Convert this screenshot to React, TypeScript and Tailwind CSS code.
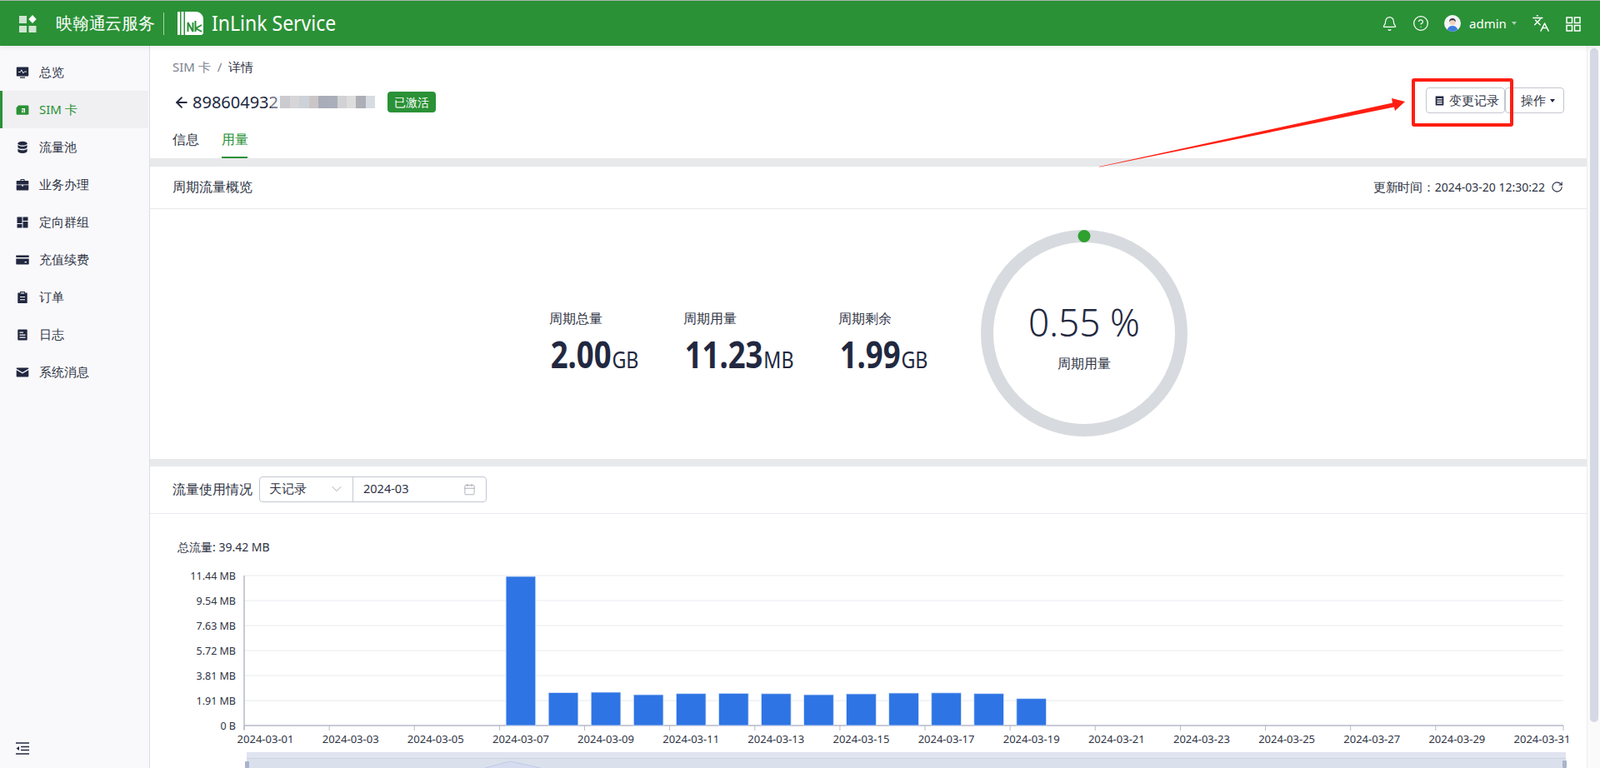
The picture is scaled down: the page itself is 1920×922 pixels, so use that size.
import { ArrowLeft, Bell, Calendar, ChevronDown, CircleHelp, Languages, RotateCw } from 'lucide-react'
import type { ReactNode } from 'react'

const dark = '#222840'

function Glyph({ children, className }: { children: ReactNode; className?: string }) {
  return (
    <svg viewBox="0 0 16 16" className={className ?? 'w-4 h-4'} fill={dark}>
      {children}
    </svg>
  )
}

const navItems: { label: string; active?: boolean; icon: ReactNode }[] = [
  {
    label: '总览',
    icon: (
      <Glyph>
        <path d="M1.5 1.5h13a.7.7 0 0 1 .7.7v9.6a.7.7 0 0 1-.7.7h-13a.7.7 0 0 1-.7-.7V2.2a.7.7 0 0 1 .7-.7zM5 13.5h6v1.2H5z" />
        <path d="M3 7.5h2.4l1.4-2.6 2 4 1.4-1.8H13" fill="none" stroke="#f9f9fb" strokeWidth="0.9" />
      </Glyph>
    ),
  },
  {
    label: 'SIM 卡',
    active: true,
    icon: (
      <Glyph>
        <path d="M3 2.6h11a1.4 1.4 0 0 1 1.4 1.4v8.4a1.4 1.4 0 0 1-1.4 1.4H2a1.4 1.4 0 0 1-1.4-1.4V5.4z" fill="#2a9136" />
        <path d="M7 6h4v5.2H9.4V7.4H7zM7 8.6h1.6v2.6H7z" fill="#f0f0f2" />
      </Glyph>
    ),
  },
  {
    label: '流量池',
    icon: (
      <Glyph>
        <ellipse cx="8" cy="3.2" rx="5.6" ry="2.4" />
        <path d="M2.4 5v2.4c0 1.3 2.5 2.4 5.6 2.4s5.6-1.1 5.6-2.4V5c-1 1.2-3.2 1.8-5.6 1.8S3.4 6.2 2.4 5z" />
        <path d="M2.4 9.4v3.2c0 1.3 2.5 2.4 5.6 2.4s5.6-1.1 5.6-2.4V9.4c-1 1.2-3.2 1.8-5.6 1.8S3.4 10.6 2.4 9.4z" />
      </Glyph>
    ),
  },
  {
    label: '业务办理',
    icon: (
      <Glyph>
        <path d="M5.4 3V1.8c0-.5.4-.8.8-.8h3.6c.4 0 .8.3.8.8V3h4.100c.4 0 .6.3.6.6v3.800H.7V3.600c0-.3.2-.6.6-.6zm1.100 0h3V2h-3z" />
        <path d="M.7 8.200h6.300v1.300h2V8.200h6.300v5.600c0 .4-.3.7-.7.7H1.400c-.4 0-.7-.3-.7-.7z" />
      </Glyph>
    ),
  },
  {
    label: '定向群组',
    icon: (
      <Glyph>
        <path d="M1.5 1.5h6v7.500h-6zM8.500 1.5h6v4.500h-6zM8.500 7h6v7.500h-6zM1.5 10h6v4.500h-6z" />
      </Glyph>
    ),
  },
  {
    label: '充值续费',
    icon: (
      <Glyph>
        <path d="M.3 2.500h15.400v2.600H.3zM.3 6.400h15.400v6.400c0 .4-.3.7-.7.7H1c-.4 0-.7-.3-.7-.7zM10.500 10v1.300h2.500V10z" fillRule="evenodd" />
      </Glyph>
    ),
  },
  {
    label: '订单',
    icon: (
      <Glyph>
        <path d="M5 1h6v1.500h2.200c.3 0 .5.2.5.5v11.500c0 .3-.2.5-.5.5H2.800c-.3 0-.5-.2-.5-.5V3c0-.3.2-.5.5-.5H5zM5.800 2.200v1.300h4.400V2.200zM5 7v1h6V7zM5 10.200v1h6v-1z" fillRule="evenodd" />
      </Glyph>
    ),
  },
  {
    label: '日志',
    icon: (
      <Glyph>
        <path d="M3 1.500h10c.4 0 .7.3.7.7v11.600c0 .4-.3.7-.7.7H3c-.4 0-.7-.3-.7-.7V2.200c0-.4.3-.7.7-.7zM4.500 4.500v1.200h4.500V4.500zM4.500 7.500v1.200h7V7.500zM4.500 10.500v1.200h7v-1.200z" fillRule="evenodd" />
      </Glyph>
    ),
  },
  {
    label: '系统消息',
    icon: (
      <Glyph>
        <path d="M1.500 2.500h13c.5 0 .8.3.8.8v.5L8 8 .7 3.800v-.5c0-.5.3-.8.8-.8z" />
        <path d="M.7 5.300 8 9.500l7.300-4.200v7.400c0 .5-.3.8-.8.8h-13c-.5 0-.8-.3-.8-.8z" />
      </Glyph>
    ),
  },
]

const mosaic = [
  'bg-[#ecebed]/40',
  'bg-[#cbcbcf]',
  'bg-[#d6d5d7]',
  'bg-[#ccd2d8]',
  'bg-[#cac6c8]',
  'bg-[#a9adb9]',
  'bg-[#aaaeba]',
  'bg-[#d2d2d4]',
  'bg-[#dddddd]',
  'bg-[#aeaeb6]',
  'bg-[#d6dce2]',
]

// bar tops in page pixels, 03-07 to 03-19
const bars = [692, 831.5, 831, 834, 832.7, 832.3, 832.8, 834, 833, 832, 831.8, 832.7, 838.7]
const yTicks = [
  ['11.44 MB', 691],
  ['9.54 MB', 721],
  ['7.63 MB', 751],
  ['5.72 MB', 781],
  ['3.81 MB', 811],
  ['1.91 MB', 841],
  ['0 B', 871],
] as const

const dayWidth = (1876 - 293) / 31

function Header() {
  return (
    <header className="relative h-[55px] shrink-0 bg-[#2a9136] border-t border-[#a9b3aa] text-white z-10 shadow-[0_2px_6px_rgba(0,0,0,0.08)]">
      <svg viewBox="0 0 22 21" className="absolute left-[22px] top-[17px] w-[22px] h-[21px]">
        <rect x="1" y="1" width="9" height="9" fill="#cfe6d2" />
        <rect x="1" y="13" width="9" height="8" fill="#cfe6d2" />
        <rect x="12.5" y="13" width="9" height="8" fill="#cfe6d2" />
        <path d="M17 0l4.700 5-4.700 5-4.700-5z" fill="#fff" />
      </svg>
      <span className="absolute left-[67px] top-[12px] text-[20px] leading-[30px] tracking-[-0.2px]">映翰通云服务</span>
      <span className="absolute left-[196px] top-[14px] w-px h-[27px] bg-white/60" />
      <svg viewBox="0 0 31 28" className="absolute left-[213px] top-[13px] w-[31px] h-[28px]">
        <rect x="0" y="0" width="3" height="28" rx="1" fill="#fff" />
        <rect x="4.5" y="0" width="3" height="28" fill="#fff" />
        <path d="M9 0h13c5 0 9 4 9 9v16c0 1.700-1.300 3-3 3H9z" fill="#fff" />
        <path d="M12.500 24V13l6 11V13M21.500 11v13M29 16l-7 4 7 4" fill="none" stroke="#2a9136" strokeWidth="2" />
      </svg>
      <span className="absolute left-[254px] top-[8px] text-[26px] leading-[36px] font-['Roboto',sans-serif] origin-left scale-x-[0.885] whitespace-nowrap">
        InLink Service
      </span>

      <Bell className="absolute left-[1658px] top-[18px] w-[19px] h-[19px]" strokeWidth={1.5} />
      <CircleHelp className="absolute left-[1695px] top-[17px] w-[20px] h-[20px]" strokeWidth={1.5} />
      <svg viewBox="0 0 20 20" className="absolute left-[1733px] top-[17px] w-5 h-5">
        <circle cx="10" cy="10" r="10" fill="#f4f5f6" />
        <path d="M3.800 17.800c.6-3.300 3-4.800 6.200-4.800s5.600 1.500 6.200 4.800A10 10 0 0 1 3.800 17.800z" fill="#3f7fdc" />
        <circle cx="10" cy="8.500" r="3.600" fill="#f3d3bd" />
        <path d="M6.200 8.500C5.800 5.500 7.500 4 10 4s4.200 1.500 3.800 4.500c-.8-1.600-2-2.200-3.800-2.200S7 6.900 6.200 8.500z" fill="#333a46" />
      </svg>
      <span className="absolute left-[1763px] top-[16px] text-[15px] leading-[22px]">admin</span>
      <span className="absolute left-[1814px] top-[25px] border-x-[3px] border-t-[4px] border-x-transparent border-t-white/60" />
      <Languages className="absolute left-[1838px] top-[16px] w-[22px] h-[22px]" strokeWidth={1.6} />
      <svg viewBox="0 0 18 18" className="absolute left-[1879px] top-[19px] w-[18px] h-[18px]" fill="none" stroke="#fff" strokeWidth="1.5">
        <rect x="1" y="1" width="6.5" height="6.5" />
        <rect x="10.5" y="1" width="6.5" height="6.5" />
        <rect x="1" y="10.5" width="6.5" height="6.5" />
        <rect x="10.5" y="10.5" width="6.5" height="6.5" />
      </svg>
    </header>
  )
}

function Sidebar() {
  return (
    <aside className="relative w-[180px] shrink-0 bg-[#f9f9fb] border-r border-[#dcdde3]">
      <nav className="flex flex-col pt-[9px]">
        {navItems.map((item) => (
          <div
            key={item.label}
            className={
              item.active
                ? 'flex items-center h-[45px] pl-[16px] mr-px border-l-[3px] border-[#2a9136] bg-[#f0f0f2] text-[#2a9136] text-[15px]'
                : 'flex items-center h-[45px] pl-[19px] text-[#2e3344] text-[15px]'
            }
          >
            <span className="flex w-[28px]">{item.icon}</span>
            {item.label}
          </div>
        ))}
      </nav>
      <svg viewBox="0 0 16 15" className="absolute left-[19px] top-[836px] w-4 h-[15px]" stroke={dark} strokeWidth="1.3" fill="none">
        <path d="M0 1h16M6 5.500h10M6 9.500h10M0 14h16" />
        <path d="M4 5v5L0.500 7.500z" fill={dark} stroke="none" />
      </svg>
    </aside>
  )
}

function Stat({ label, value, unit, width }: { label: string; value: string; unit: string; width: string }) {
  return (
    <div className={`${width} mt-[18px]`}>
      <div className="text-[16px] leading-[22px] text-[#2e3344]">{label}</div>
      <div className="flex items-baseline mt-[7px] pl-[2px] h-[50px] font-['Roboto',sans-serif] text-[#222840] whitespace-nowrap origin-left scale-x-[0.83]">
        <span className="text-[44px] leading-[50px] font-bold">{value}</span>
        <span className="text-[28px] leading-[50px] ml-[1px]">{unit}</span>
      </div>
    </div>
  )
}

function Ring() {
  return (
    <div className="relative w-[248px] h-[248px] shrink-0 -mt-[2px]">
      <svg viewBox="0 0 248 248" className="absolute inset-0">
        <circle cx="124" cy="124" r="116.5" fill="none" stroke="#d7dade" strokeWidth="15" />
        <circle cx="124" cy="7.5" r="7.5" fill="#2ea12f" />
      </svg>
      <div className="absolute left-0 right-0 top-[82px] text-center text-[46px] leading-[56px] font-light font-['Roboto',sans-serif] text-[#222840] scale-x-[0.96]">
        0.55 %
      </div>
      <div className="absolute left-0 right-0 top-[149px] text-center text-[16px] leading-[22px] text-[#2e3344]">周期用量</div>
    </div>
  )
}

function Chart() {
  return (
    <svg viewBox="180 617 1724 305" className="w-[1724px] h-[305px] block">
      <text x="213" y="662" fontSize="14" fill="#2e3344">
        总流量: 39.42 MB
      </text>
      {yTicks.map(([label, y]) => (
        <g key={label}>
          <line x1="293" x2="1876" y1={y} y2={y} stroke={y === 871 ? '#b6b9c7' : '#e8eaf0'} strokeWidth={y === 871 ? 1.5 : 1} />
          <text x="283" y={y + 5} fontSize="12.5" textAnchor="end" fill="#2e3344">
            {label}
          </text>
        </g>
      ))}
      <line x1="293" x2="293" y1="691" y2="876" stroke="#b6b9c7" strokeWidth="1.5" />
      {bars.map((top, i) => (
        <rect
          key={i}
          x={293 + (i + 6) * dayWidth + 7.7}
          y={top}
          width={35.7}
          height={871 - top}
          fill="#2e74e4"
          stroke="#dbe6fa"
          strokeWidth="0.8"
        />
      ))}
      {Array.from({ length: 16 }, (_, i) => {
        const x = i === 15 ? 1876 : 293 + i * 2 * dayWidth
        return <line key={i} x1={x} x2={x} y1="871" y2="877" stroke="#b6b9c7" />
      })}
      {Array.from({ length: 16 }, (_, i) => (
        <text key={i} x={293 + (i * 2 + 0.5) * dayWidth} y="892" fontSize="13" textAnchor="middle" fill="#2e3344">
          {`2024-03-${String(i * 2 + 1).padStart(2, '0')}`}
        </text>
      ))}
      <rect x="296" y="903" width="1583" height="7" fill="#e0e4f1" />
      <rect x="296" y="910" width="1583" height="12" fill="#dbe1ec" />
      <line x1="296" x2="1879" y1="910.5" y2="910.5" stroke="#cdd3e0" />
      <path d="M582 922 612 914 649 922" fill="#d5dcef" stroke="#bccbe8" />
      <rect x="294" y="914" width="5" height="8" rx="1" fill="#a9b4cb" />
      <rect x="1875" y="913" width="5" height="9" rx="1" fill="#a9b4cb" />
    </svg>
  )
}

export default function App() {
  return (
    <div className="relative w-[1920px] h-[922px] overflow-hidden bg-white flex flex-col text-[#2e3344] font-['Noto_Sans','Noto_Sans_CJK_SC',sans-serif]">
      <Header />
      <div className="flex flex-1 min-h-0">
        <Sidebar />
        <main className="w-[1724px] shrink-0 flex flex-col">
          <section className="relative h-[135px] shrink-0">
            <div className="absolute left-[27px] top-[14px] flex items-center text-[15px] leading-[22px]">
              <span className="text-[#7c818f]">SIM 卡</span>
              <span className="mx-2 text-[#7c818f]">/</span>
              <span>详情</span>
            </div>
            <div className="absolute left-[28px] top-[54px] flex items-center h-[27px]">
              <ArrowLeft className="w-[20px] h-[20px] text-[#222840] mr-[3px]" strokeWidth={2.2} />
              <span className="text-[20px] leading-[27px] text-[#222840]">898604932</span>
              <div className="flex h-[15px] -ml-[9px]">
                {mosaic.map((c, i) => (
                  <span key={i} className={`w-[11.4px] h-[15px] ${c}`} />
                ))}
              </div>
            </div>
            <span className="absolute left-[285px] top-[55px] h-[25px] w-[58px] rounded-sm bg-[#2a9136] text-white text-[14px] leading-[25px] text-center">
              已激活
            </span>
            <div className="absolute left-[27px] top-[100px] flex gap-[27px] text-[16px] leading-[24px]">
              <span>信息</span>
              <span className="text-[#2a9136]">用量</span>
            </div>
            <span className="absolute left-[86px] top-[133px] w-[31px] h-[2px] bg-[#2a9136]" />

            <button className="absolute left-[1531px] top-[50px] flex items-center h-[31px] w-[95px] border border-[#c4c7d0] rounded-sm bg-white text-[14.5px] pl-[10px]">
              <Glyph className="w-[11px] h-[12px] mr-[6px]">
                <path d="M1 0h14v16H1zM3.500 3.500v2h9v-2zM3.500 7.500v2h9v-2zM3.500 11v2h9v-2z" fillRule="evenodd" />
              </Glyph>
              变更记录
            </button>
            <button className="absolute left-[1626px] top-[50px] flex items-center h-[31px] w-[71px] border border-[#c4c7d0] rounded-sm bg-white text-[15px] pl-[18px]">
              操作
              <span className="ml-[5px] mt-px border-x-[3px] border-t-[4px] border-x-transparent border-t-[#222840]" />
            </button>
          </section>

          <div className="h-[10px] shrink-0 bg-[#e8e9eb]" />

          <section className="flex items-center justify-between h-[51px] shrink-0 pl-[27px] pr-[28px] pb-[2px] border-b border-[#e8e9ef]">
            <span className="text-[16px]">周期流量概览</span>
            <span className="flex items-center text-[14px]">
              <span className="text-[15px] tracking-[-0.2px]">更新时间：</span>
              2024-03-20 12:30:22
              <RotateCw className="w-[15px] h-[15px] ml-[7px] text-[#222840]" strokeWidth={1.7} />
            </span>
          </section>

          <section className="flex items-center h-[300px] shrink-0 pl-[479px]">
            <Stat label="周期总量" value="2.00" unit="GB" width="w-[161px]" />
            <Stat label="周期用量" value="11.23" unit="MB" width="w-[186px]" />
            <Stat label="周期剩余" value="1.99" unit="GB" width="w-[171px]" />
            <Ring />
          </section>

          <div className="h-[9px] shrink-0 bg-[#e8e9eb]" />

          <section className="flex items-center h-[57px] shrink-0 pl-[27px] pb-[2px] border-b border-[#e8e9ef]">
            <span className="text-[16px] mr-[8px]">流量使用情况</span>
            <div className="flex h-[31px] w-[273px] border border-[#c4c7d3] rounded-sm text-[14.5px]">
              <div className="flex items-center justify-between w-[112px] pl-[11px] pr-[9px] border-r border-[#c4c7d3]">
                <span>天记录</span>
                <ChevronDown className="w-[20px] h-[20px] text-[#9ea2ae]" strokeWidth={1.1} />
              </div>
              <div className="flex flex-1 items-center justify-between pl-[12px] pr-[12px]">
                <span>2024-03</span>
                <Calendar className="w-[15px] h-[15px] text-[#9ea2ae]" strokeWidth={1.3} />
              </div>
            </div>
          </section>

          <Chart />
        </main>
        <div className="w-4 shrink-0 bg-[#fafafb] border-l border-[#eeeef2] relative">
          <span className="absolute left-[3px] top-[3px] w-[10px] h-[809px] rounded-full bg-[#d5d8e5]" />
        </div>
      </div>

      <div className="absolute left-[1694px] top-[94px] w-[122px] h-[58px] border-[4px] border-[#ff1e12] rounded-[3px]" />
      <svg viewBox="0 0 1920 922" className="absolute inset-0 w-[1920px] h-[922px] pointer-events-none">
        <path d="M1319 200 1671 123.5 1670 118 1686 122 1674 133 1673 128.5 1319 200.5z" fill="#ff1e12" />
      </svg>
    </div>
  )
}
